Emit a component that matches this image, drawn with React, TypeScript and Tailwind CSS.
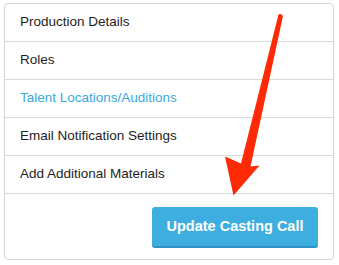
const items = [
  { label: "Production Details", active: false },
  { label: "Roles", active: false },
  { label: "Talent Locations/Auditions", active: true },
  { label: "Email Notification Settings", active: false },
  { label: "Add Additional Materials", active: false },
];

const App = () => {
  return (
    <div className="relative w-[339px] h-[265px] bg-white pt-[3px] pl-[4px] font-['Liberation_Sans',Arial,sans-serif]">
      <div className="w-[330px] h-[257px] border border-[#d3d3d3] rounded-[4px] flex flex-col">
        {items.map((item) => (
          <div
            key={item.label}
            className="h-[38px] border-b border-[#d9d9d9] flex items-center pl-[15px] text-[13.5px]"
          >
            <span className={item.active ? "text-[#3aa9de]" : "text-[#1e1e1e]"}>{item.label}</span>
          </div>
        ))}
        <div className="flex-1 flex justify-end items-start pt-[13px] pr-[15px]">
          <button className="w-[166px] h-[41px] rounded-[3px] bg-[#3eaee0] border-b-2 border-[#2d93c6] text-white font-bold text-[14.5px] pt-[1px]">
            Update Casting Call
          </button>
        </div>
      </div>
      {/* red annotation arrow */}
      <svg className="absolute left-0 top-0" width="339" height="265" viewBox="0 0 339 265">
        <path
          d="M278.5 14.5 Q281 13 283 16 L250.5 166.5 L259.5 165.5 L233.5 195.5 L225 156.5 L241 163.5 Z"
          fill="#fe2a05"
        />
      </svg>
    </div>
  );
};

export default App;
